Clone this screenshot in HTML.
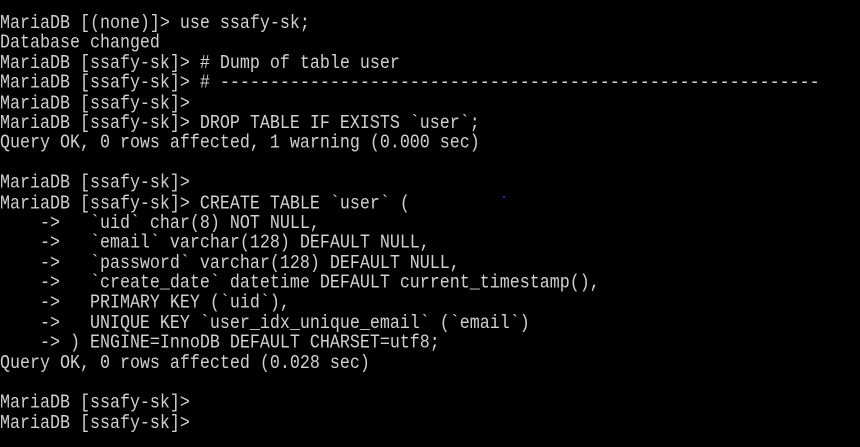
<!DOCTYPE html>
<html><head><meta charset="utf-8"><style>
html,body{margin:0;padding:0;background:#000;width:860px;height:447px;overflow:hidden}
pre{margin:0;position:absolute;left:0;top:14px;font-family:"Liberation Mono",monospace;font-size:16.67px;line-height:17.391px;color:#d0d0d0;white-space:pre;transform:scaleY(1.15);transform-origin:0 0}
.dot{position:absolute;left:503px;top:196px;width:2px;height:2px;background:#2020ff}
</style></head><body>
<pre>MariaDB [(none)]&gt; use ssafy-sk;
Database changed
MariaDB [ssafy-sk]&gt; # Dump of table user
MariaDB [ssafy-sk]&gt; # ------------------------------------------------------------
MariaDB [ssafy-sk]&gt;
MariaDB [ssafy-sk]&gt; DROP TABLE IF EXISTS `user`;
Query OK, 0 rows affected, 1 warning (0.000 sec)

MariaDB [ssafy-sk]&gt;
MariaDB [ssafy-sk]&gt; CREATE TABLE `user` (
    -&gt;   `uid` char(8) NOT NULL,
    -&gt;   `email` varchar(128) DEFAULT NULL,
    -&gt;   `password` varchar(128) DEFAULT NULL,
    -&gt;   `create_date` datetime DEFAULT current_timestamp(),
    -&gt;   PRIMARY KEY (`uid`),
    -&gt;   UNIQUE KEY `user_idx_unique_email` (`email`)
    -&gt; ) ENGINE=InnoDB DEFAULT CHARSET=utf8;
Query OK, 0 rows affected (0.028 sec)

MariaDB [ssafy-sk]&gt;
MariaDB [ssafy-sk]&gt;</pre>
<div class="dot"></div>
</body></html>
